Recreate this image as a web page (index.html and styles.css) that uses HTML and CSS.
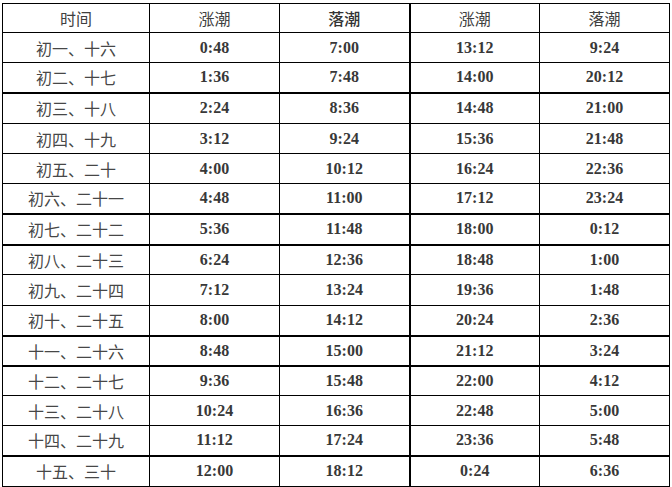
FILE: index.html
```html
<!DOCTYPE html>
<html lang="zh">
<head>
<meta charset="utf-8">
<title>潮汐时间表</title>
<link rel="stylesheet" href="styles.css">
</head>
<body>
<table class="tide">
  <colgroup>
    <col class="c-day"><col class="c-t"><col class="c-t"><col class="c-t"><col class="c-t">
  </colgroup>
  <thead>
    <tr class="h29">
      <th>时间</th><th>涨潮</th><th class="b">落潮</th><th class="sep">涨潮</th><th>落潮</th>
    </tr>
  </thead>
  <tbody>
    <tr class="h30"><td class="day">初一、十六</td><td>0:48</td><td>7:00</td><td>13:12</td><td>9:24</td></tr>
    <tr class="h30 thick"><td class="day">初二、十七</td><td>1:36</td><td>7:48</td><td>14:00</td><td>20:12</td></tr>
    <tr class="h31"><td class="day">初三、十八</td><td>2:24</td><td>8:36</td><td>14:48</td><td>21:00</td></tr>
    <tr class="h30"><td class="day">初四、十九</td><td>3:12</td><td>9:24</td><td>15:36</td><td>21:48</td></tr>
    <tr class="h30"><td class="day">初五、二十</td><td>4:00</td><td>10:12</td><td>16:24</td><td>22:36</td></tr>
    <tr class="h30 thick"><td class="day">初六、二十一</td><td>4:48</td><td>11:00</td><td>17:12</td><td>23:24</td></tr>
    <tr class="h31 thick"><td class="day">初七、二十二</td><td>5:36</td><td>11:48</td><td>18:00</td><td>0:12</td></tr>
    <tr class="h30"><td class="day">初八、二十三</td><td>6:24</td><td>12:36</td><td>18:48</td><td>1:00</td></tr>
    <tr class="h31"><td class="day">初九、二十四</td><td>7:12</td><td>13:24</td><td>19:36</td><td>1:48</td></tr>
    <tr class="h30 thick"><td class="day">初十、二十五</td><td>8:00</td><td>14:12</td><td>20:24</td><td>2:36</td></tr>
    <tr class="h30 thick"><td class="day">十一、二十六</td><td>8:48</td><td>15:00</td><td>21:12</td><td>3:24</td></tr>
    <tr class="h30"><td class="day">十二、二十七</td><td>9:36</td><td>15:48</td><td>22:00</td><td>4:12</td></tr>
    <tr class="h30"><td class="day">十三、二十八</td><td>10:24</td><td>16:36</td><td>22:48</td><td>5:00</td></tr>
    <tr class="h30 thick"><td class="day">十四、二十九</td><td>11:12</td><td>17:24</td><td>23:36</td><td>5:48</td></tr>
    <tr class="h31"><td class="day">十五、三十</td><td>12:00</td><td>18:12</td><td>0:24</td><td>6:36</td></tr>
  </tbody>
</table>
</body>
</html>
```

FILE: styles.css
```css
html, body {
  margin: 0;
  padding: 0;
  background: #ffffff;
}

body {
  padding: 3px 0 0 2px;
}

.tide {
  border-collapse: collapse;
  table-layout: fixed;
  width: 668px;
  color: #383838;
  font-family: "Liberation Serif", "Noto Sans CJK SC", serif;
  font-size: 16px;
}

.c-day { width: 147px; }
.c-t { width: 130px; }

.tide th,
.tide td {
  border: 1px solid #000;
  padding: 0;
  text-align: center;
  vertical-align: middle;
  line-height: 18px;
}

.tide th {
  font-family: "Noto Sans CJK SC", sans-serif;
  font-weight: 400;
  font-size: 16px;
  color: #404040;
}

.tide th.b {
  font-weight: 500;
  color: #333;
}

.tide td {
  font-weight: 700;
}

.tide td.day {
  font-family: "Noto Sans CJK SC", sans-serif;
  font-weight: 400;
  font-size: 16px;
  color: #474747;
}

.tide th:nth-child(4),
.tide td:nth-child(4) {
  border-left: 2px solid #000;
}

.tide tr.thick td,
.tide tr.thick th {
  border-bottom: 2px solid #000;
}

.h29 { height: 29px; }
.h30 { height: 30px; }
.h31 { height: 31px; }
```
